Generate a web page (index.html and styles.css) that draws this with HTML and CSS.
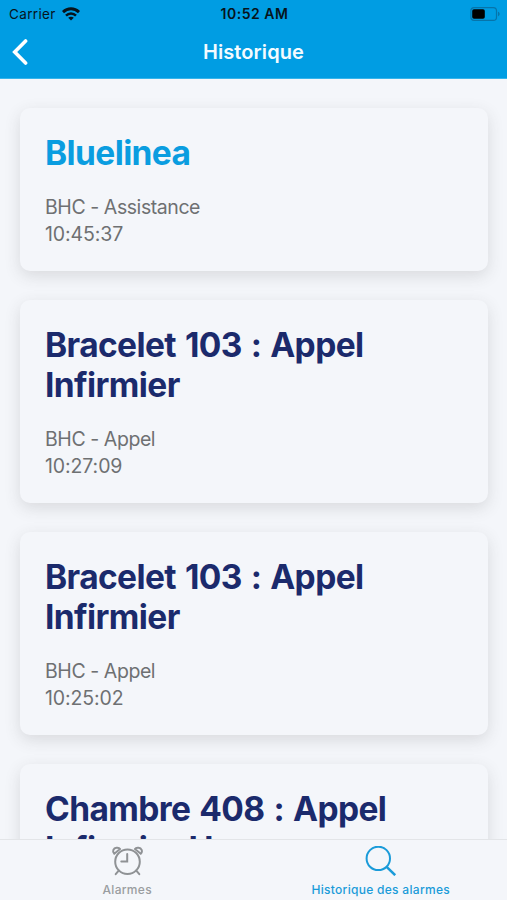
FILE: index.html
```html
<!DOCTYPE html>
<html lang="fr">
<head>
<meta charset="utf-8">
<title>Historique</title>
<link rel="stylesheet" href="styles.css">
</head>
<body>
<div class="app">
  <header class="header">
    <div class="status">
      <div class="status-left">
        <span class="carrier">Carrier</span>
        <svg class="wifi" viewBox="0 0 18 14" width="18" height="14"><g fill="none" stroke="#07141c" stroke-width="2.9"><path d="M1 5.1C5.6.6 12.4.6 17 5.1"/><path d="M4 8.6C6.9 5.7 11.1 5.7 14 8.6" stroke-width="2.5"/></g><path d="M6.2 10.8C7.8 9.3 10.2 9.3 11.8 10.8L9 13.6Z" fill="#07141c"/></svg>
      </div>
      <span class="clock">10:52 AM</span>
      <div class="status-right">
        <svg viewBox="0 0 30 14" width="30" height="14"><rect x=".9" y=".6" width="25.6" height="12.8" rx="3.2" fill="none" stroke="#0674aa" stroke-width="1.2"/><rect x="2.2" y="2.2" width="12.6" height="9.6" rx="1.8" fill="#000"/><path d="M28 4.8C30.2 5.5 30.2 8.5 28 9.2Z" fill="#0674aa"/></svg>
      </div>
    </div>
    <div class="navbar">
      <svg class="back" viewBox="0 0 16 26" width="16" height="26"><path d="M13.6 2 2.7 13 13.6 24" fill="none" stroke="#fff" stroke-width="3.6" stroke-linecap="round"/></svg>
      <h1 class="title">Historique</h1>
    </div>
  </header>
  <main class="list">
    <article class="card">
      <h2 class="name name-blue">Bluelinea</h2>
      <p class="detail">BHC - Assistance<br><span class="time">10:45:37</span></p>
    </article>
    <article class="card">
      <h2 class="name">Bracelet 103 : Appel Infirmier</h2>
      <p class="detail">BHC - Appel<br><span class="time">10:27:09</span></p>
    </article>
    <article class="card">
      <h2 class="name">Bracelet 103 : Appel Infirmier</h2>
      <p class="detail">BHC - Appel<br><span class="time">10:25:02</span></p>
    </article>
    <article class="card">
      <h2 class="name">Chambre 408 : Appel Infirmier Hr</h2>
    </article>
  </main>
  <nav class="tabs">
    <a class="tab">
      <svg viewBox="0 0 32 30" width="32" height="30"><g fill="none" stroke="#8f9295" stroke-width="2" stroke-linecap="round"><circle cx="16.5" cy="15.7" r="12.3"/><path d="M16.2 8V15.6H10.3"/><path d="M7.7 24.6 4.7 28.2M25.3 24.6 28.3 28.2"/><path d="M3.3 7.7C.8 5.2 2.6 2 5.5 1.7 7.2 1.5 8.5 2 9 3Z"/><path d="M29.7 7.7C32.2 5.2 30.4 2 27.5 1.7 25.8 1.5 24.5 2 24 3Z"/></g></svg>
      <span class="label">Alarmes</span>
    </a>
    <a class="tab active">
      <svg viewBox="0 0 32 30" width="32" height="30"><g fill="none" stroke="#1a9bd9" stroke-width="2"><circle cx="13.3" cy="12.4" r="11.7"/><path d="M21.6 20.8 30.2 29.2" stroke-width="2.5"/></g></svg>
      <span class="label">Historique des alarmes</span>
    </a>
  </nav>
</div>
</body>
</html>
```

FILE: styles.css
```css
* { box-sizing: border-box; }
body { margin: 0; font-family: Inter, sans-serif; background: #f4f6fa; }
.app { width: 507px; height: 900px; display: flex; flex-direction: column; overflow: hidden; }
.header { flex: none; height: 79px; background: #009de3; border-bottom: 1px solid #35b4eb; }
.status { height: 27px; padding: 0 7px 0 9px; display: grid; grid-template-columns: 1fr auto 1fr; align-items: center; color: #07141c; }
.status-left { display: flex; align-items: center; gap: 6px; }
.status-right { display: flex; justify-content: flex-end; }
.carrier { font-size: 13.5px; letter-spacing: .35px; }
.clock { font-size: 14px; font-weight: 600; letter-spacing: .5px; }
.navbar { height: 50px; display: grid; grid-template-columns: 16px 1fr 16px; align-items: center; padding: 0 12px; }
.title { margin: 0; font-size: 20px; font-weight: 600; color: #f4fbff; text-align: center; letter-spacing: .1px; }
.list { flex: 1; min-height: 0; overflow: hidden; padding: 29px 19px 0 20px; display: flex; flex-direction: column; gap: 29px; }
.card { flex: none; padding: 25px 25px 23px; border-radius: 10px; background: #f4f6fa; box-shadow: 0 5px 16px rgba(60, 60, 60, .15); }
.name { margin: 0 0 21px; font-size: 33.5px; line-height: 40px; font-weight: 700; letter-spacing: -.6px; word-spacing: 1.6px; color: #1b2a6c; }
.name-blue { color: #0a9de0; }
.detail { margin: 0; font-size: 19.5px; line-height: 27px; letter-spacing: -.43px; color: #6e7072; }
.time { letter-spacing: -.1px; }
.tabs { flex: none; position: relative; height: 61px; display: flex; background: #f4f6fa; border-top: 1px solid #e3e5e8; }
.tab { flex: 1; display: flex; flex-direction: column; align-items: center; padding: 6px 0 0 1px; color: #9a9da0; }
.tab svg { display: block; }
.label { margin-top: 7px; font-size: 12px; line-height: 14px; font-weight: 500; letter-spacing: .3px; }
.active { color: #1a9bd9; }
```
